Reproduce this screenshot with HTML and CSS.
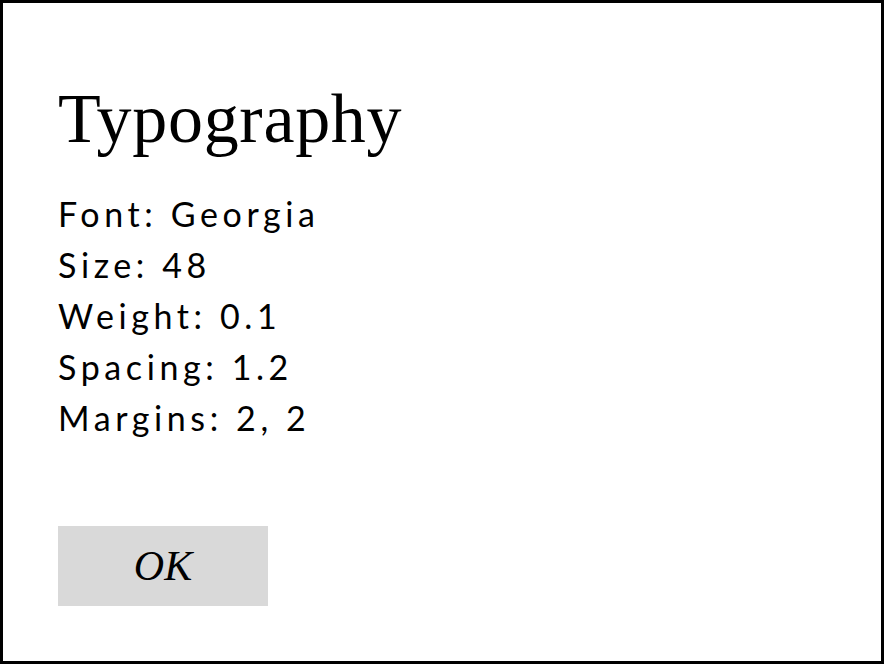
FILE: index.html
```html
<!DOCTYPE html>
<html>
<head>
<meta charset="utf-8">
<link rel="stylesheet" href="styles.css">
</head>
<body>
<div class="frame">
  <h1 class="title">Typography</h1>
  <div class="props">
    <div class="prop">Font: Georgia</div>
    <div class="prop">Size: 48</div>
    <div class="prop">Weight: 0.1</div>
    <div class="prop">Spacing: 1.2</div>
    <div class="prop">Margins: 2, 2</div>
  </div>
  <button class="ok">OK</button>
</div>
</body>
</html>
```
FILE: styles.css
```css
html, body {
  margin: 0;
  padding: 0;
  background: #fff;
}
.frame {
  box-sizing: border-box;
  width: 884px;
  height: 664px;
  border: 3px solid #000;
  padding: 81px 0 0 55px;
  display: flex;
  flex-direction: column;
  align-items: flex-start;
}
.title {
  margin: 0;
  font-family: "Liberation Serif", serif;
  font-weight: normal;
  font-size: 70px;
  line-height: 70px;
  letter-spacing: 0.7px;
  color: #000;
}
.props {
  margin-top: 34px;
  font-family: Lato, "Open Sans", sans-serif;
  font-size: 34px;
  line-height: 51px;
  letter-spacing: 4.6px;
  color: #000;
}
.ok {
  margin-top: 83px;
  width: 210px;
  height: 80px;
  border: none;
  padding: 0;
  background: #d9d9d9;
  font-family: "Liberation Serif", serif;
  font-style: italic;
  font-size: 42px;
  color: #000;
}
```
